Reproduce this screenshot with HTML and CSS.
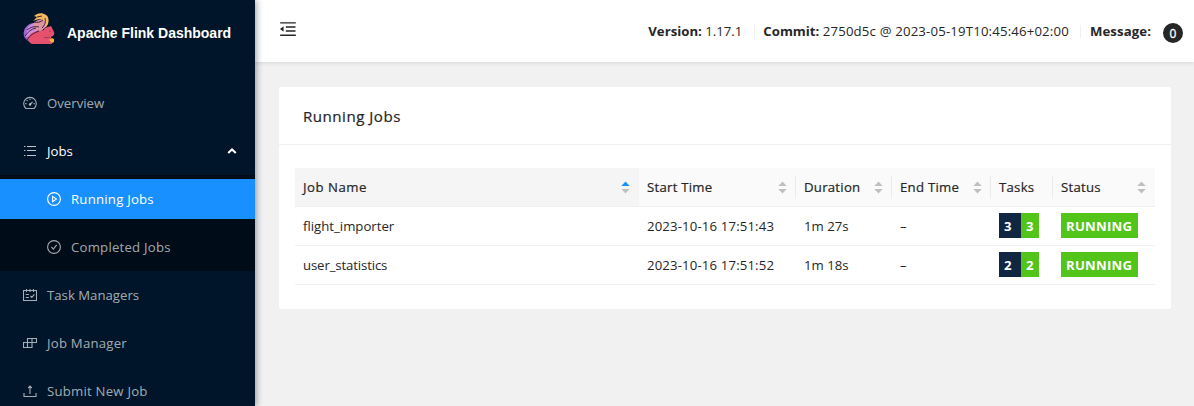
FILE: index.html
```html
<!DOCTYPE html>
<html lang="en">
<head>
<meta charset="utf-8">
<title>Apache Flink Dashboard</title>
<link rel="stylesheet" href="styles.css">
</head>
<body>
<div class="app">
  <aside class="sidebar">
    <div class="brand">
      <svg class="logo" viewBox="0 0 32 34">
        <path d="M7 30C1 27 0 23 1 19c1-4 4-7 9-8l10 2-3 10z" fill="#a265cf"/>
        <path d="M4 18c1-4 4-6 8-7l7 1-3 5-9 7-4 1z" fill="#cf8fdd"/>
        <path d="M10 12c2-3 5-4 9-5l5-1c2 3 1 7-1 9l-5 4-6-1z" fill="#dd94a0"/>
        <path d="M11 4c3-3 8-4 12-1 3 2 3 6 2 9l-3 3c1-4 0-7-4-8-3 0-6 1-8 2 2-2 3-3 4-4z" fill="#f7b85d"/>
        <path d="M9 32c-3-1-4-4-4-6 2-5 6-7 11-7l5-1c0-2 3-3 4-3 2-1 4-1 4 1l2 4c1 3-1 4-3 5l1 7z" fill="#e6526e"/>
        <path d="M2 24c3-4 6-7 11-8M4 18c4-3 7-4 12-3M4 28c3-5 7-7 12-9M11 10c3 1 7 0 9-2M22 6c1 4 0 7-3 10M14 5l5-1" fill="none" stroke="#31143c" stroke-width=".9"/>
        <path d="M21 25c2 1 4 1 6 0" fill="none" stroke="#8b2947" stroke-width=".8"/>
        <circle cx="27" cy="19" r=".6" fill="#581a36"/>
        <path d="M26 28l3-2 2 1v3l-2 1z" fill="#ffad3b"/>
      </svg>
      <h1 class="brand-name">Apache Flink Dashboard</h1>
    </div>
    <nav class="menu">
      <a class="item">
        <svg class="icon" viewBox="0 0 14 14"><path d="M3 12.500a6.300 6.300 0 1 1 8 0zM7 8.500l2.600-2.700M7 2.800v1.300M3.600 4.200l.9.9M2.200 7.600h1.300M10.500 7.600h1.300"/><circle cx="7" cy="8.400" r=".7"/></svg>
        <span>Overview</span>
      </a>
      <a class="item open">
        <svg class="icon" viewBox="0 0 14 14"><path d="M4 2.500h9M4 6.500h9M4 11.500h9M1 2.500h1.400M1 6.500h1.400M1 11.500h1.400"/></svg>
        <span>Jobs</span>
        <svg class="arrow" viewBox="0 0 10 8"><path d="m1.200 6 3.800-3.600L8.800 6"/></svg>
      </a>
      <div class="submenu">
        <a class="item sub selected wide">
          <svg class="icon" viewBox="0 0 14 14"><circle cx="7" cy="7" r="6.400"/><path d="M5.600 4.400 9.400 7 5.600 9.600z"/></svg>
          <span>Running Jobs</span>
        </a>
        <a class="item sub wide">
          <svg class="icon" viewBox="0 0 14 14"><circle cx="7" cy="7" r="6.400"/><path d="m4.400 6.900 1.900 2.200 3.400-4.300"/></svg>
          <span>Completed Jobs</span>
        </a>
      </div>
      <a class="item">
        <svg class="icon" viewBox="0 0 14 14"><path d="M.5 2.500h13v10H.5zM3.500 1v3M7 1v3M10.500 1v3M2.700 6.500h3.200M2.700 9.500h3.200M7.400 7.900l1.400 1.500 2.600-3"/></svg>
        <span>Task Managers</span>
      </a>
      <a class="item wide">
        <svg class="icon" viewBox="0 0 14 14"><path d="M.5 6.500h8.500v5H.5zM4.500 2.500h9v4h-9zM4.500 6.500v5M9 2.500v4"/></svg>
        <span>Job Manager</span>
      </a>
      <a class="item wide">
        <svg class="icon" viewBox="0 0 14 14"><path d="M1 9v3.500h12V9M7 10V2.200M5.200 4 7 2.100 8.800 4"/></svg>
        <span>Submit New Job</span>
      </a>
    </nav>
  </aside>
  <div class="main">
    <header class="header">
      <svg class="fold" viewBox="0 0 1024 1024"><path d="M400 370h496v72H400zM400 582h496v72H400zM112 160h800v72H112zM112 792h800v72H112zM115 519l157 123c6 5 14 1 14-7V389c0-7-8-12-14-7L115 505a9 9 0 0 0 0 14z"/></svg>
      <div class="info">
        <span class="version"><strong>Version:</strong> 1.17.1</span>
        <i class="divider"></i>
        <span class="commit"><strong>Commit:</strong> <span class="value">2750d5c @ 2023-05-19T10:45:46+02:00</span></span>
        <i class="divider"></i>
        <strong class="message">Message:</strong>
        <span class="badge">0</span>
      </div>
    </header>
    <main class="content">
      <section class="card">
        <h2 class="card-head">Running Jobs</h2>
        <table class="jobs">
          <colgroup><col class="c-name"><col class="c-start"><col class="c-duration"><col class="c-end"><col class="c-tasks"><col class="c-status"></colgroup>
          <thead>
            <tr>
              <th class="sorted"><div class="th">Job Name<svg class="sort asc" viewBox="0 0 9 13"><path class="up" d="M.3 5 4.500.4 8.700 5z"/><path class="down" d="M.3 8h8.400L4.500 12.600z"/></svg></div></th>
              <th><div class="th ruled">Start Time<svg class="sort" viewBox="0 0 9 13"><path class="up" d="M.3 5 4.500.4 8.700 5z"/><path class="down" d="M.3 8h8.400L4.500 12.600z"/></svg></div></th>
              <th><div class="th ruled">Duration<svg class="sort" viewBox="0 0 9 13"><path class="up" d="M.3 5 4.500.4 8.700 5z"/><path class="down" d="M.3 8h8.400L4.500 12.600z"/></svg></div></th>
              <th><div class="th ruled">End Time<svg class="sort" viewBox="0 0 9 13"><path class="up" d="M.3 5 4.500.4 8.700 5z"/><path class="down" d="M.3 8h8.400L4.500 12.600z"/></svg></div></th>
              <th><div class="th ruled">Tasks</div></th>
              <th><div class="th">Status<svg class="sort" viewBox="0 0 9 13"><path class="up" d="M.3 5 4.500.4 8.700 5z"/><path class="down" d="M.3 8h8.400L4.500 12.600z"/></svg></div></th>
            </tr>
          </thead>
          <tbody>
            <tr><td>flight_importer</td><td class="time">2023-10-16 17:51:43</td><td>1m 27s</td><td>–</td><td><div class="tags"><span class="tag total">3</span><span class="tag green">3</span></div></td><td><div class="tags"><span class="tag green state">RUNNING</span></div></td></tr>
            <tr><td class="tight">user_statistics</td><td class="time">2023-10-16 17:51:52</td><td>1m 18s</td><td>–</td><td><div class="tags"><span class="tag total">2</span><span class="tag green">2</span></div></td><td><div class="tags"><span class="tag green state">RUNNING</span></div></td></tr>
          </tbody>
        </table>
      </section>
    </main>
  </div>
</div>
</body>
</html>
```

FILE: styles.css
```css
* { box-sizing: border-box; }
body {
  margin: 0;
  font: 13.2px/22px "Open Sans", "Noto Sans", sans-serif;
  color: #262626;
}
.app { display: flex; height: 406px; overflow: hidden; background: #f1f1f1; }

.sidebar {
  position: relative;
  z-index: 2;
  flex: none;
  width: 255px;
  background: #001529;
  box-shadow: 2px 0 6px rgba(0, 21, 41, .35);
}
.brand { display: flex; align-items: center; height: 63px; padding: 0 0 2px 23px; }
.logo { width: 32px; height: 34px; margin-top: -3px; }
.brand-name {
  margin: 5px 0 0 12px;
  color: #fff;
  font: bold 14px/20px "Liberation Sans", Arial, sans-serif;
  white-space: nowrap;
}
.menu { padding-top: 16px; }
.item {
  display: flex;
  align-items: center;
  height: 40px;
  margin: 4px 0 8px;
  padding: 0 18px 0 23px;
  color: rgba(255, 255, 255, .65);
  white-space: nowrap;
}
.item.wide { letter-spacing: .22px; }
.item.open { margin-bottom: 4px; color: #fff; }
.icon { flex: none; width: 14px; height: 14px; margin-right: 10px; fill: none; stroke: currentColor; stroke-width: 1.1; }
.item.open .icon { opacity: .75; }
.arrow { width: 10px; height: 8px; margin-left: auto; fill: none; stroke: currentColor; stroke-width: 2; }
.submenu { display: flow-root; height: 96px; background: #000c17; }
.item.sub { padding-left: 47px; }
.item.selected { background: #1890ff; color: #fff; }

.main { flex: 1; min-width: 0; }
.header {
  position: relative;
  z-index: 1;
  display: flex;
  align-items: center;
  justify-content: space-between;
  height: 62px;
  padding: 0 11px 0 23px;
  background: #fff;
  box-shadow: 0 1px 4px rgba(0, 21, 41, .12);
}
.fold { width: 20px; height: 20px; margin-bottom: 4px; fill: #262626; }
.info { display: flex; align-items: center; white-space: nowrap; }
.divider { width: 1px; height: 13px; background: #f0f0f0; }
.version { margin-right: 12px; }
.commit { margin: 0 11px 0 8px; }
.value { letter-spacing: .17px; }
.message { margin-left: 9px; letter-spacing: .1px; }
.badge {
  width: 20px;
  height: 20px;
  margin: 4px 0 0 12px;
  border-radius: 50%;
  background: #262626;
  color: #fff;
  font-size: 12px;
  line-height: 21px;
  text-align: center;
  -webkit-text-stroke: .3px #fff;
}

.content { padding: 25px 23px 0 24px; }
.card { height: 222px; background: #fff; border-radius: 2px; }
.card-head {
  height: 58px;
  margin: 0 0 23px;
  padding: 17px 24px 0;
  border-bottom: 1px solid #f0f0f0;
  font-size: 15.1px;
  font-weight: 500;
  line-height: 24px;
  letter-spacing: .5px;
  -webkit-text-stroke: .2px #262626;
}
.jobs { width: 860px; margin: 0 16px; border-collapse: separate; border-spacing: 0; table-layout: fixed; }
.c-name { width: 344px; }
.c-start { width: 157px; }
.c-duration { width: 96px; }
.c-end { width: 99px; }
.c-tasks { width: 62px; }
.c-status { width: 102px; }
th, td { height: 39px; padding: 0 8px; border-bottom: 1px solid #f0f0f0; text-align: left; white-space: nowrap; }
th { padding-right: 0; background: #fafafa; font-weight: 500; letter-spacing: .25px; -webkit-text-stroke: .2px #262626; }
th.sorted { background: #f5f5f5; letter-spacing: .5px; }
.th { display: flex; align-items: center; justify-content: space-between; height: 23px; padding-right: 9px; }
.ruled { padding-right: 8px; border-right: 1px solid #ebebeb; }
.time { letter-spacing: .14px; }
.tight { letter-spacing: -.13px; }
.sort { width: 9px; height: 13px; fill: #bfbfbf; }
.sort.asc .up { fill: #1890ff; }
.tags { display: flex; margin-bottom: 1px; }
.tag { height: 25px; padding: 0 5px; color: #fff; font-weight: 700; line-height: 27px; }
.total { width: 22px; background: #112641; }
.green { background: #52c41a; }
.state { width: 77px; letter-spacing: .22px; }
```
